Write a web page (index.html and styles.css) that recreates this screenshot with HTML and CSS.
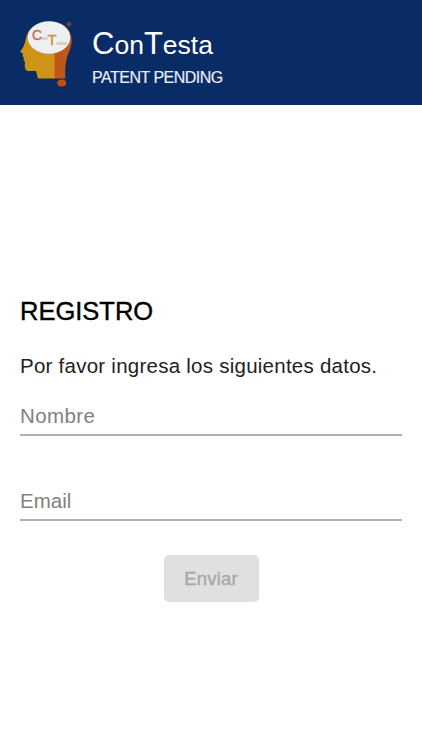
FILE: index.html
```html
<!DOCTYPE html>
<html lang="es">
<head>
    <meta charset="UTF-8">
    <meta name="viewport" content="width=device-width, initial-scale=1.0">
    <title>ConTesta - Registro</title>
    <link rel="stylesheet" href="styles.css">
</head>
<body>
    <header class="header">
        <svg class="logo" viewBox="0 0 56 68" aria-hidden="true">
            <path fill="#cf9417" d="M35 2H29C17 2 8 8 6 18L5 22C4.500 26 2 29 0.500 31C0 32.500 2 33 3 33.500L2.500 36L4 38L3.500 40L5 42C4.500 46 4.500 50.500 8 51H16L18 58.500H35Z"/>
            <path fill="#c0561a" d="M34.500 2C45 3 52 11 51.700 21C51.500 29 47 34 46 42C45 48 45 53 45.500 58.500H34.500Z"/>
            <ellipse cx="29" cy="17.500" rx="21.300" ry="16.300" fill="#edf0f1"/>
            <circle cx="49" cy="4.300" r="2.300" fill="#75413b"/>
            <ellipse cx="41.700" cy="63" rx="4.500" ry="3.500" fill="#bd5212"/>
            <g class="logo-text">
                <text x="12" y="20" font-size="14" fill="#c76a4d" stroke="#c76a4d" stroke-width="0.4">C</text>
                <text x="21.800" y="20" font-size="5.500" fill="#d39b80">on</text>
                <text x="27.500" y="25" font-size="15" fill="#d68b36" stroke="#d68b36" stroke-width="0.4">T</text>
                <text x="36.500" y="24.500" font-size="5.500" fill="#d0a468">esta</text>
            </g>
        </svg>
        <div class="brand">
            <h1 class="brand-name"><span class="big">C</span>on<span class="big">T</span>esta</h1>
            <p class="brand-note">PATENT PENDING</p>
        </div>
    </header>

    <main class="container">
        <h2 class="title">REGISTRO</h2>
        <p class="intro">Por favor ingresa los siguientes datos.</p>
        <form class="form">
            <input class="field" type="text" id="name" placeholder="Nombre" aria-label="Nombre" required>
            <input class="field field-email" type="email" id="email" placeholder="Email" aria-label="Email" required>
            <button class="submit-btn" type="submit" disabled>Enviar</button>
        </form>
    </main>
</body>
</html>
```
FILE: styles.css
```css
* {
    box-sizing: border-box;
}
body {
    margin: 0;
    font-family: "Liberation Sans", Arial, sans-serif;
    background-color: #fff;
    color: #000;
}
h1, h2, p {
    margin: 0;
    font-weight: normal;
}
.header {
    display: flex;
    align-items: flex-start;
    height: 105px;
    padding: 20px 20px 0;
    background-color: #092b66;
    color: #fff;
}
.logo {
    width: 56px;
    height: 68px;
}
.logo-text {
    font-family: "Liberation Sans", Arial, sans-serif;
}
.brand {
    padding-left: 16px;
}
.brand-name {
    height: 48px;
    font-size: 26.5px;
    line-height: 50px;
}
.brand-name .big {
    font-size: 31px;
    line-height: 1;
}
.brand-note {
    font-size: 16px;
    line-height: 20px;
    letter-spacing: -0.5px;
    color: #e9edf6;
    -webkit-text-stroke: 0.2px #e9edf6;
}
.container {
    padding: 191px 20px 0;
}
.title {
    font-size: 25.5px;
    line-height: 30px;
    -webkit-text-stroke: 0.4px #000;
}
.intro {
    margin-top: 26px;
    font-size: 20.5px;
    line-height: 28px;
    letter-spacing: 0.25px;
    color: #222;
}
.form {
    display: flex;
    flex-direction: column;
}
.field {
    height: 40px;
    margin-top: 16px;
    padding: 1px 0 0;
    border: 0;
    border-bottom: 2px solid #b0b0b0;
    border-radius: 0;
    background: none;
    font-family: inherit;
    font-size: 20.5px;
    letter-spacing: 0.4px;
}
.field::placeholder {
    color: #808080;
    opacity: 1;
}
.field-email {
    margin-top: 45px;
    letter-spacing: 0;
}
.submit-btn {
    align-self: center;
    width: 95px;
    height: 47px;
    margin-top: 34px;
    padding: 1px 0 0;
    border: 0;
    border-radius: 5px;
    background-color: #e0e0e0;
    color: #a8a8a8;
    font-family: inherit;
    font-size: 18.5px;
    letter-spacing: 0.2px;
    -webkit-text-stroke: 0.4px #a8a8a8;
}
```
